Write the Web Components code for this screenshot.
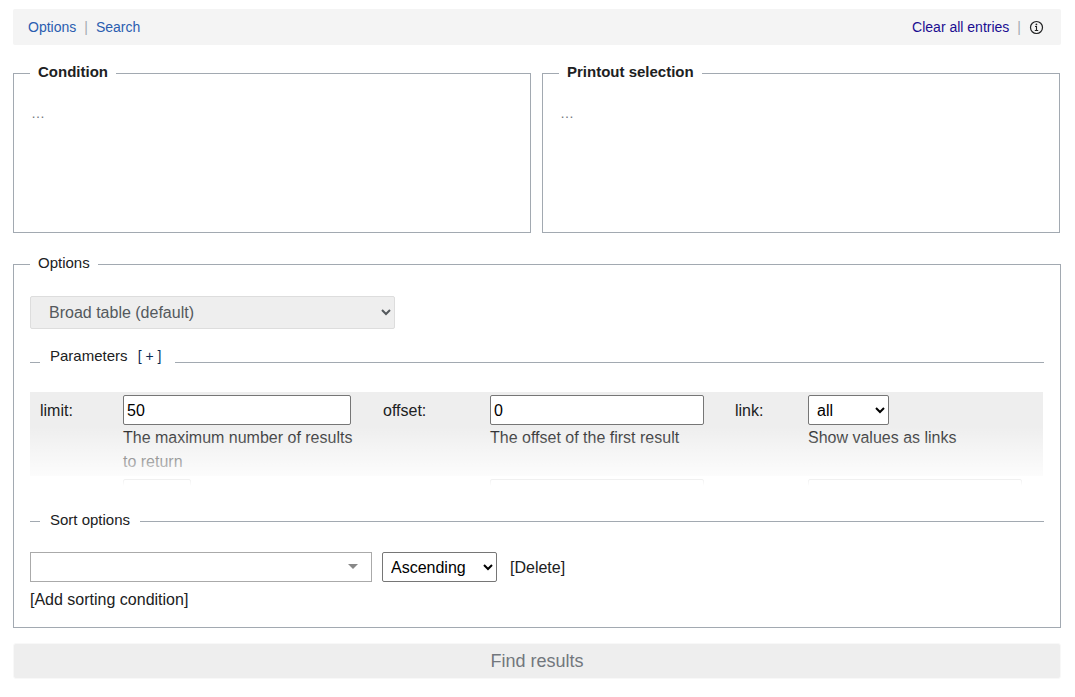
<!DOCTYPE html>
<html lang="en">
<head>
<meta charset="utf-8">
<meta name="viewport" content="width=device-width, initial-scale=1">
<title>Semantic search</title>
<style>
  body {
    margin: 9px 14px 18px 13px;
    background: #fff;
    color: #202122;
    font: 16px/24px "Liberation Sans", Arial, sans-serif;
  }
</style>
</head>
<body>
<ask-page></ask-page>

<script>
const define = (name, html, setup) => {
  const template = document.createElement('template');
  template.innerHTML = html;
  customElements.define(name, class extends HTMLElement {
    constructor() {
      super();
      this.attachShadow({ mode: 'open' }).append(template.content.cloneNode(true));
    }
    connectedCallback() {
      if (setup && !this.ready) {
        this.ready = true;
        setup(this, this.shadowRoot);
      }
    }
  });
};

/* Bar of links above the form */
define('ask-toolbar', `
  <style>
    :host { display: block; }
    nav { display: flex; align-items: center; justify-content: space-between; height: 36px;
          padding: 0 17px 0 15px; background: #f4f4f4; border-radius: 2px; font-size: 14px; }
    div { display: flex; align-items: center; gap: 8px; }
    a { color: #2a5db0; text-decoration: none; }
    .clear { color: #1a0d91; }
    .bar { color: #a2a9b1; }
    button { display: flex; margin: 0; padding: 1px 0 0; border: 0; background: none; color: #202122; }
  </style>
  <nav>
    <div><a href="#options">Options</a><span class="bar">|</span><a href="#search">Search</a></div>
    <div><a class="clear" href="#clear">Clear all entries</a><span class="bar">|</span>
      <button type="button" aria-label="Help">
        <svg width="15" height="15" viewBox="0 0 15 15" fill="none" stroke="currentColor">
          <circle cx="7.5" cy="7.5" r="6" stroke-width="1.2"/>
          <path d="M6 6.5h1.5v4M5.8 10.5h3.4" stroke-width="1.1"/>
          <circle cx="7.4" cy="4.4" r=".9" fill="currentColor" stroke="none"/>
        </svg>
      </button></div>
  </nav>`);

/* Framed group with a caption on its border */
define('ask-panel', `
  <style>
    :host { display: block; min-width: 0; }
    fieldset { min-width: 0; margin: 0; padding: 0 16px 15px; border: 1px solid #a2a9b1; }
    legend { padding: 0 8px 2px; font-size: 15px; line-height: 18px; }
    :host([strong]) legend { font-weight: bold; }
  </style>
  <fieldset><legend></legend><slot></slot></fieldset>`,
  (host, root) => { root.querySelector('legend').textContent = host.getAttribute('caption'); });

/* Free text area of a query part */
define('ask-editor', `
  <style>
    :host { display: block; padding-top: 20px; }
    textarea { display: block; box-sizing: border-box; width: 100%; height: 114px; margin: 0; padding: 0 1px;
               border: 0; outline: 0; resize: none; background: none; color: #202122;
               font: 14px/20px "Liberation Sans", Arial, sans-serif; }
    textarea::placeholder { color: #72777d; }
  </style>
  <textarea placeholder="…"></textarea>`,
  (host, root) => { root.querySelector('textarea').setAttribute('aria-label', host.getAttribute('label')); });

/* Inner group: only a rule beside its caption */
define('ask-section', `
  <style>
    :host { display: block; }
    fieldset { min-width: 0; margin: 0; padding: 0; border: 0; border-top: 1px solid #a2a9b1; }
    legend { margin-left: 10px; padding: 0 10px 2px; font-size: 15px; line-height: 18px; }
    :host([raised]) legend { padding: 0 14px 12px 10px; }
  </style>
  <fieldset><legend><slot name="caption"></slot></legend><slot></slot></fieldset>`);

/* One labelled parameter: label, control, description */
define('ask-field', `
  <style>
    :host { display: grid; grid-column: span 2; grid-template-columns: subgrid; padding: 3px 0 2px; background: #eee; }
    :host([bare]) { background: none; }
    label { padding-left: 10px; line-height: 32px; }
    .value { min-width: 0; padding-right: 10px; }
    input, select { display: block; box-sizing: border-box; height: 30px; margin: 0; border: 1px solid #767676;
                    border-radius: 2px; background: #fff; color: #000; font: 16px "Liberation Sans", Arial, sans-serif; }
    input { width: 95%; padding: 1px 3px 0; }
    select { padding: 0 4px; }
    p { margin: 1px 0 0; }
  </style>
  <label for="control"></label><div class="value"></div>`,
  (host, root) => {
    const label = root.querySelector('label');
    const cell = root.querySelector('.value');
    label.textContent = host.getAttribute('label') || '';
    const kind = host.getAttribute('kind') || 'input';
    const control = document.createElement(kind);
    control.id = 'control';
    if (kind === 'select') {
      control.add(new Option(host.getAttribute('value') || ''));
      control.style.width = host.getAttribute('size') + 'px';
    } else {
      control.type = 'text';
      control.value = host.getAttribute('value') || '';
    }
    if (host.hasAttribute('bare')) control.setAttribute('aria-label', 'Further parameter');
    cell.append(control);
    if (host.hasAttribute('note')) {
      const note = document.createElement('p');
      note.textContent = host.getAttribute('note');
      cell.append(note);
    }
  });

/* Collapsed parameter list that fades out at its lower edge */
define('ask-parameters', `
  <style>
    :host { display: block; position: relative; height: 94px; overflow: hidden; }
    .grid { display: grid; grid-template-columns: 93fr 250fr 117fr 235fr 83fr 235fr; padding-right: 1px; }
    .fade { position: absolute; inset: auto 0 0; height: 60px; pointer-events: none;
            background: linear-gradient(rgba(255,255,255,0), #fff); }
  </style>
  <div class="grid"><slot></slot></div><div class="fade"></div>`);

/* Sorting row */
define('ask-sort', `
  <style>
    :host { display: block; }
    .row { display: flex; align-items: center; gap: 10px; }
    .combo { position: relative; width: 342px; }
    .combo svg { position: absolute; right: 14px; top: 12px; }
    input, select { display: block; box-sizing: border-box; height: 30px; margin: 0; background: #fff; color: #000;
                    font: 16px "Liberation Sans", Arial, sans-serif; }
    input { width: 100%; padding: 0 30px 0 8px; border: 1px solid #aaa; }
    select { width: 115px; padding: 0 4px; border: 1px solid #767676; border-radius: 2px; }
    a { color: #202122; text-decoration: none; }
    .delete { padding: 2px 0 0 3px; }
    .add { display: block; width: max-content; margin-top: 6px; }
  </style>
  <div class="row">
    <div class="combo"><input type="text" role="combobox" aria-expanded="false" aria-label="Sort by property">
      <svg width="10" height="5" viewBox="0 0 10 5"><path d="M0 0h10L5 5z" fill="#888"/></svg></div>
    <select aria-label="Sort order"><option>Ascending</option><option>Descending</option></select>
    <a class="delete" href="#delete">[Delete]</a>
  </div>
  <a class="add" href="#add">[Add sorting condition]</a>`);

/* Whole form */
define('ask-page', `
  <style>
    :host { display: block; }
    .query { display: grid; grid-template-columns: 1fr 1fr; gap: 11px; margin-top: 18px; padding-right: 1px; }
    .options { margin-top: 21px; }
    .format { display: block; box-sizing: border-box; width: 36%; height: 33px; margin: 22px 0 0; padding: 0 0 0 14px;
              border: 1px solid #ddd; border-radius: 2px; background: #eee; color: #54595d;
              font: 16px "Liberation Sans", Arial, sans-serif; }
    .parameters { margin-top: 18px; }
    .parameters a { margin-left: 6px; color: #0b2a52; font-size: 14px; text-decoration: none; }
    ask-parameters { margin-top: 15px; }
    .sorting { margin-top: 25px; }
    ask-sort { padding: 21px 0 0; }
    .find { display: block; width: 100%; height: 36px; margin: 15px 0 0; padding: 0; border: 1px solid #f8f8f8;
            border-radius: 3px; background: #eee; color: #72777d; font: 18px "Liberation Sans", Arial, sans-serif; }
  </style>
  <ask-toolbar></ask-toolbar>
  <div class="query">
    <ask-panel strong caption="Condition"><ask-editor label="Condition"></ask-editor></ask-panel>
    <ask-panel strong caption="Printout selection"><ask-editor label="Printout selection"></ask-editor></ask-panel>
  </div>
  <ask-panel class="options" caption="Options">
    <select class="format" aria-label="Result format"><option>Broad table (default)</option></select>
    <ask-section class="parameters" raised>
      <span slot="caption">Parameters <a href="#more">[ + ]</a></span>
      <ask-parameters>
        <ask-field label="limit:" value="50" note="The maximum number of results to return"></ask-field>
        <ask-field label="offset:" value="0" note="The offset of the first result"></ask-field>
        <ask-field label="link:" kind="select" size="81" value="all" note="Show values as links"></ask-field>
        <ask-field bare kind="select" size="68"></ask-field>
        <ask-field bare></ask-field>
        <ask-field bare></ask-field>
      </ask-parameters>
    </ask-section>
    <ask-section class="sorting">
      <span slot="caption">Sort options</span>
      <ask-sort></ask-sort>
    </ask-section>
  </ask-panel>
  <button class="find" type="submit">Find results</button>`);
</script>
</body>
</html>
